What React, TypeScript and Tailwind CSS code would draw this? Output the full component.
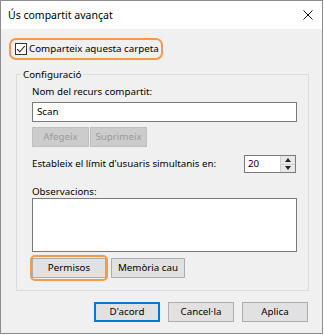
import React from "react";

const font = { fontFamily: '"Noto Sans", "Segoe UI", sans-serif' };

function Btn({ children, className = "" }: { children: React.ReactNode; className?: string }) {
  return (
    <div
      className={`h-[20px] flex items-center justify-center border border-[#adadad] bg-[#e1e1e1] text-[9.75px] text-black ${className}`}
    >
      {children}
    </div>
  );
}

function DisabledBtn({ children, className = "" }: { children: React.ReactNode; className?: string }) {
  return (
    <div
      className={`h-[20px] flex items-center justify-center border border-[#bfbfbf] bg-[#cccccc] text-[9.75px] text-[#9a9a9a] ${className}`}
    >
      {children}
    </div>
  );
}

export default function App() {
  return (
    <div className="w-[324px] h-[335px] bg-white" style={font}>
      <div className="w-[323px] h-[334px] border border-[#8c8c8c] flex flex-col bg-[#f0f0f0]">
        {/* Title bar */}
        <div className="h-[28px] bg-white flex items-center justify-between pl-[7px] pr-[9px]">
          <span className="text-[10.5px] text-black leading-none">Ús compartit avançat</span>
          <svg width="10" height="10" viewBox="0 0 10 10">
            <path d="M0.5 0.5 L9.5 9.5 M9.5 0.5 L0.5 9.5" stroke="#111" strokeWidth="1" fill="none" />
          </svg>
        </div>

        {/* Checkbox row */}
        <div className="mt-[10px] ml-[14px] h-[20px] relative inline-flex self-start items-center">
          <span className="absolute left-[-6px] top-[-1px] right-[-4px] bottom-[-1px] border-2 border-[#f39a4c] rounded-[7px]"></span>
          <span className="w-[12px] h-[12px] border border-[#333333] bg-white flex items-center justify-center">
            <svg width="10" height="10" viewBox="0 0 10 10">
              <path d="M1.2 5.2 L3.8 7.8 L8.8 2" stroke="#222" strokeWidth="1.1" fill="none" />
            </svg>
          </span>
          <span className="ml-[2px] text-[9.75px] text-black leading-none">Comparteix aquesta carpeta</span>
        </div>

        {/* Group box */}
        <div className="mt-[15px] ml-[15px] w-[293px] h-[217px] border border-[#dcdcdc] relative pl-[15px] pr-[11px] pt-[10px] flex flex-col">
          <span className="absolute left-[4px] top-[-7px] px-[2px] bg-[#f0f0f0] text-[9.75px] leading-[13px] text-black">
            Configuració
          </span>

          <div className="h-[14px] leading-[14px] text-[9.75px] text-black">Nom del recurs compartit:</div>
          <div className="mt-[3px] h-[20px] border border-[#7a7a7a] bg-white flex items-center pl-[4px] text-[9.75px] text-black">
            Scan
          </div>

          <div className="mt-[5px] flex gap-[1px]">
            <DisabledBtn className="w-[57px]">Afegeix</DisabledBtn>
            <DisabledBtn className="w-[57px]">Suprimeix</DisabledBtn>
          </div>

          <div className="mt-[8px] flex items-center justify-between">
            <span className="text-[9.75px] text-black leading-none">Estableix el límit d'usuaris simultanis en:</span>
            <div className="mr-[1px] w-[52px] h-[18px] border border-[#7a7a7a] bg-white flex">
              <div className="flex-1 flex items-center pl-[3px] text-[9.75px] text-black">20</div>
              <div className="w-[15px] flex flex-col border-l border-[#d0d0d0]">
                <div className="flex-1 bg-[#e8e8e8] flex items-center justify-center border-b border-[#d0d0d0]">
                  <svg width="6" height="4" viewBox="0 0 6 4">
                    <path d="M0 4 L3 0 L6 4 Z" fill="#222" />
                  </svg>
                </div>
                <div className="flex-1 bg-[#e8e8e8] flex items-center justify-center">
                  <svg width="6" height="4" viewBox="0 0 6 4">
                    <path d="M0 0 L6 0 L3 4 Z" fill="#222" />
                  </svg>
                </div>
              </div>
            </div>
          </div>

          <div className="mt-[12px] h-[13px] leading-[13px] text-[9.75px] text-black">Observacions:</div>
          <div className="h-[54px] border border-[#7a7a7a] bg-white"></div>

          <div className="mt-[6px] flex gap-[5px]">
            <div className="relative">
              <span className="absolute left-[-2px] top-[-3px] right-[-2px] bottom-[-3px] border-2 border-[#f39a4c] rounded-[5px]"></span>
              <Btn className="w-[74px]">Permisos</Btn>
            </div>
            <Btn className="w-[74px]">Memòria cau</Btn>
          </div>
        </div>

        {/* Bottom buttons */}
        <div className="mt-[11px] flex justify-end gap-[8px] pr-[14px]">
          <div className="w-[66px] h-[20px] flex items-center justify-center border-2 border-[#0078d7] bg-[#e1e1e1] text-[9.75px] text-black">
            D'acord
          </div>
          <Btn className="w-[66px]">Cancel·la</Btn>
          <Btn className="w-[66px]">Aplica</Btn>
        </div>
      </div>
    </div>
  );
}
